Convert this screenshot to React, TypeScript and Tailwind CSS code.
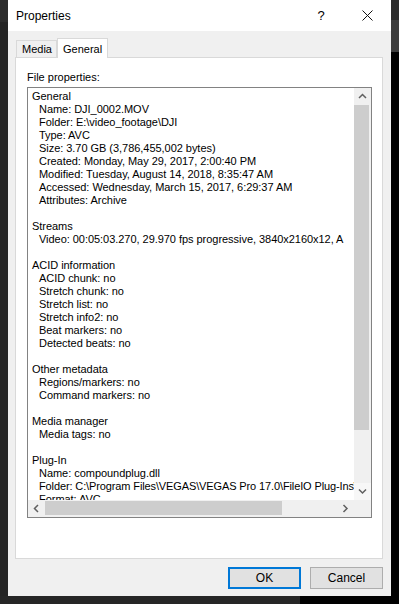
import React from "react";

const lines: [number, string][] = [
  [0, "General"],
  [1, "Name: DJI_0002.MOV"],
  [1, "Folder: E:\\video_footage\\DJI"],
  [1, "Type: AVC"],
  [1, "Size: 3.70 GB (3,786,455,002 bytes)"],
  [1, "Created: Monday, May 29, 2017, 2:00:40 PM"],
  [1, "Modified: Tuesday, August 14, 2018, 8:35:47 AM"],
  [1, "Accessed: Wednesday, March 15, 2017, 6:29:37 AM"],
  [1, "Attributes: Archive"],
  [0, ""],
  [0, "Streams"],
  [1, "Video: 00:05:03.270, 29.970 fps progressive, 3840x2160x12, A"],
  [0, ""],
  [0, "ACID information"],
  [1, "ACID chunk: no"],
  [1, "Stretch chunk: no"],
  [1, "Stretch list: no"],
  [1, "Stretch info2: no"],
  [1, "Beat markers: no"],
  [1, "Detected beats: no"],
  [0, ""],
  [0, "Other metadata"],
  [1, "Regions/markers: no"],
  [1, "Command markers: no"],
  [0, ""],
  [0, "Media manager"],
  [1, "Media tags: no"],
  [0, ""],
  [0, "Plug-In"],
  [1, "Name: compoundplug.dll"],
  [2, "Folder: C:\\Program Files\\VEGAS\\VEGAS Pro 17.0\\FileIO Plug-Ins\\"],
  [1, "Format: AVC"],
];

const Chevron = ({ dir }: { dir: "up" | "down" | "left" | "right" }) => {
  const d =
    dir === "up"
      ? "M1 5 L4.5 1.5 L8 5"
      : dir === "down"
      ? "M1 1.5 L4.5 5 L8 1.5"
      : dir === "left"
      ? "M5 1 L1.5 4.5 L5 8"
      : "M1.5 1 L5 4.5 L1.5 8";
  const w = dir === "up" || dir === "down" ? 9 : 7;
  const h = dir === "up" || dir === "down" ? 7 : 9;
  return (
    <svg width={w} height={h} viewBox={`0 0 ${w} ${h}`}>
      <path d={d} fill="none" stroke="#606060" strokeWidth="1.5" />
    </svg>
  );
};

export default function App() {
  const font = { fontFamily: '"Liberation Sans", Arial, sans-serif' };
  return (
    <div className="w-[399px] h-[604px] flex flex-col bg-[#262626] overflow-hidden" style={font}>
      <div className="flex h-[596px]">
        <div className="w-[8px] flex flex-col">
          <div className="h-[22px] bg-[#2c2c2c]" />
          <div className="flex-1 bg-[#242424]" />
        </div>
        <div className="w-[383px] flex flex-col bg-[#f0f0f0]">
          {/* title bar */}
          <div className="h-[31px] bg-white flex items-center text-[12px] text-black">
            <span className="pl-[8px] flex-1">Properties</span>
            <span className="w-[14px] text-center text-[13px] mr-[34px]">?</span>
            <svg width="11" height="11" viewBox="0 0 11 11" className="mr-[18px]">
              <path d="M0.5 0.5 L10.5 10.5 M10.5 0.5 L0.5 10.5" stroke="#111" strokeWidth="1" />
            </svg>
          </div>
          {/* body */}
          <div className="flex-1 flex flex-col pl-[7px] pr-[8px] pt-[7px]">
            <div className="flex items-end h-[19px] relative z-10 pl-[1px]">
              <div className="h-[17px] w-[41px] border border-b-0 border-[#d9d9d9] bg-[#f0f0f0] text-[11px] text-black flex items-center pl-[5px] mb-0">
                Media
              </div>
              <div className="h-[20px] w-[51px] border border-b-0 border-[#d9d9d9] bg-white text-[11px] text-black flex items-start pt-[2px] pl-[5px] -mb-px">
                General
              </div>
            </div>
            <div className="h-[502px] border border-[#d9d9d9] bg-white flex flex-col pl-[11px] pr-[10px] pt-[13px]">
              <div className="text-[11px] leading-[13px] text-black h-[16px]">File properties:</div>
              <div className="h-[431px] border border-[#828282] flex flex-col">
                <div className="flex flex-1 min-h-0">
                  <div className="flex-1 overflow-hidden pt-[2px] pl-[4px]">
                    {lines.map(([ind, t], i) => (
                      <div
                        key={i}
                        className={`h-[13px] leading-[13px] text-[11px] text-black whitespace-nowrap ${
                          ind === 2 ? "pl-[7px] tracking-[-0.12px]" : ind === 1 ? "pl-[7px] tracking-[-0.04px]" : "tracking-[-0.04px]"
                        }`}
                      >
                        {t}
                      </div>
                    ))}
                  </div>
                  <div className="w-[17px] flex flex-col bg-[#f0f0f0]">
                    <div className="h-[17px] flex items-center justify-center">
                      <Chevron dir="up" />
                    </div>
                    <div className="h-[325px] bg-[#cdcdcd] mr-[2px]" />
                    <div className="flex-1" />
                    <div className="h-[17px] flex items-center justify-center bg-[#f7f7f7]">
                      <Chevron dir="down" />
                    </div>
                  </div>
                </div>
                <div className="h-[17px] flex bg-[#f0f0f0]">
                  <div className="w-[17px] flex items-center justify-center">
                    <Chevron dir="left" />
                  </div>
                  <div className="flex-1 flex items-start pt-[1px]">
                    <div className="w-[237px] h-[14px] bg-[#cdcdcd]" />
                  </div>
                  <div className="w-[17px] flex items-center justify-center">
                    <Chevron dir="right" />
                  </div>
                  <div className="w-[17px] bg-[#f0f0f0]" />
                </div>
              </div>
            </div>
            <div className="flex justify-end gap-[9px] mt-[8px]">
              <button className="w-[73px] h-[22px] border-2 border-[#0078d7] bg-[#e1e1e1] text-[12px] text-black flex items-center justify-center">
                OK
              </button>
              <button className="w-[73px] h-[22px] border border-[#adadad] bg-[#e1e1e1] text-[12px] text-black flex items-center justify-center">
                Cancel
              </button>
            </div>
          </div>
        </div>
        <div className="w-[8px] flex flex-col">
          <div className="h-[20px] bg-[#2b2b2b]" />
          <div className="h-[32px] bg-[#3d3d3d]" />
          <div className="flex-1 bg-black" />
        </div>
      </div>
      <div className="flex h-[8px]">
        <div className="w-[300px] bg-[#262626]" />
        <div className="flex-1 bg-black" />
      </div>
    </div>
  );
}
